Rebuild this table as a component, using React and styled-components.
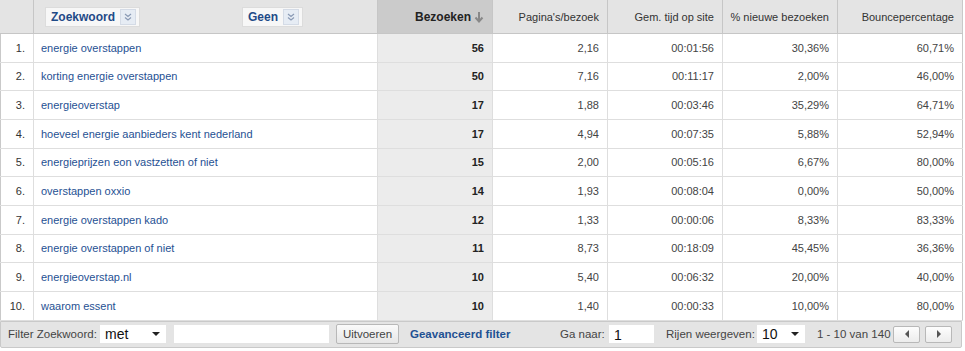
import React from 'react';
import styled, { createGlobalStyle } from 'styled-components';

const GlobalStyle = createGlobalStyle`
  body {
    margin: 0;
    background: #ffffff;
    font-family: Arial, "Liberation Sans", sans-serif;
    font-size: 11px;
    color: #333;
  }
`;

const rows = [
  ['energie overstappen', 56, '2,16', '00:01:56', '30,36%', '60,71%'],
  ['korting energie overstappen', 50, '7,16', '00:11:17', '2,00%', '46,00%'],
  ['energieoverstap', 17, '1,88', '00:03:46', '35,29%', '64,71%'],
  ['hoeveel energie aanbieders kent nederland', 17, '4,94', '00:07:35', '5,88%', '52,94%'],
  ['energieprijzen eon vastzetten of niet', 15, '2,00', '00:05:16', '6,67%', '80,00%'],
  ['overstappen oxxio', 14, '1,93', '00:08:04', '0,00%', '50,00%'],
  ['energie overstappen kado', 12, '1,33', '00:00:06', '8,33%', '83,33%'],
  ['energie overstappen of niet', 11, '8,73', '00:18:09', '45,45%', '36,36%'],
  ['energieoverstap.nl', 10, '5,40', '00:06:32', '20,00%', '40,00%'],
  ['waarom essent', 10, '1,40', '00:00:33', '10,00%', '80,00%'],
];

const Wrap = styled.div`
  width: 962px;
`;

const Table = styled.table`
  width: 962px;
  border-collapse: collapse;
  table-layout: fixed;
  border-left: 1px solid #c9c9c9;
  border-right: 1px solid #c9c9c9;
`;

const Th = styled.th`
  height: 33px;
  padding: 0 8px 0 0;
  background: ${p => (p.$sorted ? '#cbcbcb' : '#e4e4e4')};
  border-left: 1px solid ${p => (p.$first ? '#e4e4e4' : '#c6c6c6')};
  border-bottom: 1px solid #c6c6c6;
  text-align: right;
  font-weight: ${p => (p.$sorted ? 'bold' : 'normal')};
  color: ${p => (p.$sorted ? '#222' : '#333')};
  font-size: ${p => (p.$sorted ? '12px' : '11px')};
  white-space: nowrap;
`;

const DimTh = styled(Th)`
  text-align: left;
  padding: 0 0 0 11px;
`;

const DimRow = styled.div`
  display: flex;
  align-items: center;
  justify-content: space-between;
  width: 258px;
`;

const Picker = styled.div`
  display: flex;
  align-items: center;
  gap: 5px;
  height: 18px;
  padding: 0 3px 0 5px;
  background: #f7f7f7;
  border: 1px solid #dcdcdc;
  color: #1f4a87;
  font-weight: bold;
  font-size: 12px;
`;

const PickerIcon = styled.span`
  display: flex;
  align-items: center;
  justify-content: center;
  width: 14px;
  height: 14px;
  background: #e6ecf4;
  border: 1px solid #d4dbe6;
`;

const Td = styled.td`
  height: 27.67px;
  padding: 0 8px 0 0;
  text-align: right;
  border-left: 1px solid #dedede;
  border-bottom: 1px solid #dedede;
  background: ${p => (p.$sorted ? '#ececec' : '#fff')};
  font-weight: ${p => (p.$sorted ? 'bold' : 'normal')};
  color: ${p => (p.$sorted ? '#222' : '#444')};
`;

const IndexTd = styled(Td)`
  border-left: none;
  padding: 0 8px 0 0;
  color: #333;
`;

const KeyTd = styled(Td)`
  text-align: left;
  padding: 0 0 0 7px;
`;

const KeyLink = styled.a`
  color: #1f5193;
  text-decoration: none;
`;

const Footer = styled.div`
  display: flex;
  align-items: center;
  height: 25px;
  padding: 0 0 0 7px;
  background: #e4e4e4;
  border: 1px solid #c9c9c9;
  border-radius: 0 0 2px 2px;
  color: #444;
  font-size: 11.5px;
  white-space: nowrap;
`;

const Label = styled.span`
  display: inline-block;
  width: ${p => (p.$w ? `${p.$w}px` : 'auto')};
`;

const Select = styled.div`
  display: flex;
  align-items: center;
  justify-content: space-between;
  width: ${p => p.$w}px;
  height: 18px;
  padding: 0 6px 0 5px;
  box-sizing: border-box;
  background: #fff;
  color: #111;
  font-size: 14px;
  margin-right: ${p => p.$mr || 0}px;
`;

const Caret = styled.span`
  width: 0;
  height: 0;
  border-left: 4px solid transparent;
  border-right: 4px solid transparent;
  border-top: 4px solid #222;
`;

const Input = styled.div`
  width: ${p => p.$w}px;
  height: 18px;
  box-sizing: border-box;
  background: #fff;
  padding: 0 0 0 5px;
  color: #111;
  font-size: 14px;
  line-height: 20px;
  margin-right: ${p => p.$mr || 0}px;
`;

const Button = styled.button`
  width: 63px;
  height: 20px;
  padding: 0;
  font-family: Arial, "Liberation Sans", sans-serif;
  font-size: 11.5px;
  color: #444;
  background: linear-gradient(#fafafa, #e6e6e6);
  border: 1px solid #b8b8b8;
  border-radius: 2px;
  margin-right: ${p => p.$mr || 0}px;
`;

const Advanced = styled.a`
  display: inline-block;
  width: 150px;
  color: #1f5193;
  font-weight: bold;
  text-decoration: none;
`;

const PageBtn = styled.button`
  display: flex;
  align-items: center;
  justify-content: center;
  width: 27px;
  height: 17px;
  padding: 0;
  background: linear-gradient(#fdfdfd, #ececec);
  border: 1px solid #b8b8b8;
  border-radius: 2px;
  margin-right: ${p => p.$mr || 0}px;
`;

const Chevrons = () => (
  <svg width="10" height="10" viewBox="0 0 10 10">
    <path d="M2 2 L5 4.5 L8 2 M2 5.5 L5 8 L8 5.5" fill="none" stroke="#8a9ab5" strokeWidth="1.2" />
  </svg>
);

const SortArrow = () => (
  <svg width="10" height="12" viewBox="0 0 10 12" style={{ marginLeft: 3, verticalAlign: -2 }}>
    <path d="M5 1 V10 M1.5 6.5 L5 10.5 L8.5 6.5" fill="none" stroke="#888" strokeWidth="2" />
  </svg>
);

const Tri = ({ dir }) => (
  <svg width="6" height="8" viewBox="0 0 6 8">
    <path d={dir === 'left' ? 'M5 0 L1 4 L5 8 Z' : 'M1 0 L5 4 L1 8 Z'} fill="#555" />
  </svg>
);

export default function App() {
  return (
    <Wrap>
      <GlobalStyle />
      <Table>
        <colgroup>
          <col style={{ width: 33 }} />
          <col style={{ width: 344 }} />
          <col style={{ width: 115 }} />
          <col style={{ width: 115 }} />
          <col style={{ width: 115 }} />
          <col style={{ width: 115 }} />
          <col style={{ width: 125 }} />
        </colgroup>
        <thead>
          <tr>
            <Th $first />
            <DimTh>
              <DimRow>
                <Picker>Zoekwoord<PickerIcon><Chevrons /></PickerIcon></Picker>
                <Picker>Geen<PickerIcon><Chevrons /></PickerIcon></Picker>
              </DimRow>
            </DimTh>
            <Th $sorted>Bezoeken<SortArrow /></Th>
            <Th>Pagina's/bezoek</Th>
            <Th>Gem. tijd op site</Th>
            <Th>% nieuwe bezoeken</Th>
            <Th>Bouncepercentage</Th>
          </tr>
        </thead>
        <tbody>
          {rows.map((r, i) => (
            <tr key={i}>
              <IndexTd>{i + 1}.</IndexTd>
              <KeyTd><KeyLink href="#">{r[0]}</KeyLink></KeyTd>
              <Td $sorted>{r[1]}</Td>
              <Td>{r[2]}</Td>
              <Td>{r[3]}</Td>
              <Td>{r[4]}</Td>
              <Td>{r[5]}</Td>
            </tr>
          ))}
        </tbody>
      </Table>
      <Footer>
        <Label $w={92}>Filter Zoekwoord:</Label>
        <Select $w={66} $mr={8}>met<Caret /></Select>
        <Input $w={155} $mr={7} />
        <Button $mr={11}>Uitvoeren</Button>
        <Advanced href="#">Geavanceerd filter</Advanced>
        <Label $w={49}>Ga naar:</Label>
        <Input $w={45} $mr={12}>1</Input>
        <Label $w={91}>Rijen weergeven:</Label>
        <Select $w={48} $mr={12}>10<Caret /></Select>
        <Label $w={76}>1 - 10 van 140</Label>
        <PageBtn $mr={5}><Tri dir="left" /></PageBtn>
        <PageBtn><Tri dir="right" /></PageBtn>
      </Footer>
    </Wrap>
  );
}
